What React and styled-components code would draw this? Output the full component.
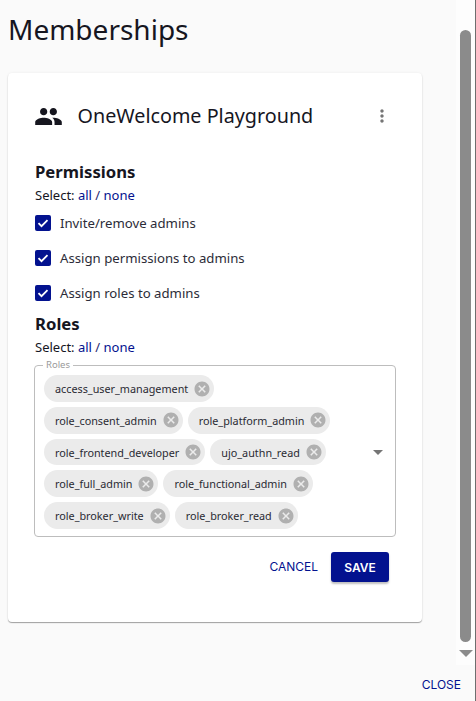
import React from "react";
import styled, { createGlobalStyle } from "styled-components";

const Global = createGlobalStyle`
  html, body { margin: 0; padding: 0; width: 476px; height: 701px; overflow: hidden; background: #fafafa; }
  * { box-sizing: border-box; }
  body { font-family: "Noto Sans", "Open Sans", sans-serif; color: #16161f; }
`;

const Dialog = styled.div`
  width: 476px;
  height: 701px;
  display: flex;
  flex-direction: column;
  border-right: 1px solid #6e6e6e;
`;
const Body = styled.div`
  height: 665px;
  display: flex;
`;
const Content = styled.div`
  width: 456px;
  padding: 0 34px 0 8px;
`;
const Title = styled.h1`
  margin: 0;
  height: 73px;
  padding-top: 11px;
  font-size: 28px;
  line-height: 36px;
  font-weight: 400;
`;
const Card = styled.section`
  width: 414px;
  height: 549px;
  background: #fff;
  border-radius: 4px;
  box-shadow: 0 1px 1px rgba(0,0,0,.35), 0 0 3px rgba(0,0,0,.06);
  padding: 0 27px;
`;
const CardHeader = styled.header`
  height: 86px;
  display: flex;
  align-items: center;
`;
const PeopleIcon = styled.svg`
  width: 29px;
  height: 29px;
  margin-left: -1px;
  fill: #16161f;
`;
const CardTitle = styled.div`
  font-size: 19.75px;
  line-height: 28px;
  margin-left: 14.5px;
  flex: 1;
`;
const MoreIcon = styled.svg`
  width: 20px;
  height: 20px;
  margin-right: 3px;
  fill: #757575;
`;
const Heading = styled.h2`
  margin: 0;
  font-size: 16.7px;
  line-height: 22px;
  font-weight: 700;
`;
const Permissions = styled.div`
  padding-top: 2px;
`;
const SelectLine = styled.div`
  font-size: 13px;
  line-height: 18px;
  margin-top: 3px;
  a { color: #03128f; text-decoration: none; }
`;
const All = styled.span`
  color: #2a2a70;
`;
const CheckRow = styled.label`
  display: flex;
  align-items: center;
  height: 35px;
  font-size: 13.2px;
  color: #2c2c38;
  &:first-of-type { margin-top: 1px; }
`;
const Box = styled.svg`
  width: 16px;
  height: 16px;
  margin-right: 9px;
  flex: none;
`;
const RolesBlock = styled.div`
  margin-top: 3px;
`;
const Field = styled.fieldset`
  margin: 5px 0 0 -1px;
  padding: 0 0 1px 9px;
  width: 362px;
  height: 176px;
  border: 1px solid #bdbdbd;
  border-radius: 4px;
  display: flex;
  align-items: center;
  min-inline-size: 0;
`;
const Legend = styled.legend`
  font-size: 9.5px;
  line-height: 8px;
  color: #9a9a9a;
  padding: 0 3px;
  margin-left: -1px;
`;
const Chips = styled.div`
  width: 295px;
  display: flex;
  flex-wrap: wrap;
  gap: 5px;
`;
const Chip = styled.div`
  height: 26.75px;
  border-radius: 13.5px;
  background: #ebebeb;
  display: flex;
  align-items: center;
  padding: 0 3px 0 11px;
  font-size: 10.8px;
  color: #2a2a33;
`;
const ChipX = styled.svg`
  width: 18px;
  height: 18px;
  margin-left: 5px;
  fill: #b0b0b0;
`;
const Caret = styled.div`
  width: 0;
  height: 0;
  margin-left: 34px;
  margin-top: 1px;
  border-left: 5px solid transparent;
  border-right: 5px solid transparent;
  border-top: 5px solid #757575;
`;
const Actions = styled.div`
  display: flex;
  justify-content: flex-end;
  align-items: center;
  width: 354px;
  margin-top: 15px;
  gap: 13px;
`;
const TextButton = styled.button`
  border: 0;
  background: none;
  padding: 0;
  font-family: Inter, sans-serif;
  font-size: 12px;
  font-weight: 400;
  color: #03128f;
  line-height: 30px;
`;
const SaveButton = styled.button`
  width: 58px;
  height: 30px;
  border: 0;
  border-radius: 3px;
  background: #03128f;
  color: #fff;
  padding: 0;
  font-family: Inter, sans-serif;
  font-size: 12px;
  font-weight: 600;
  box-shadow: 0 2px 2px rgba(0,0,0,.25);
`;
const Scrollbar = styled.div`
  width: 19px;
  background: #fdfdfd;
  display: flex;
  flex-direction: column;
  align-items: center;
  padding-top: 30px;
`;
const Thumb = styled.div`
  width: 11px;
  height: 612px;
  background: #8b8b8b;
  border-radius: 6px;
`;
const ArrowDown = styled.div`
  width: 0;
  height: 0;
  margin-top: 8px;
  border-left: 7px solid transparent;
  border-right: 7px solid transparent;
  border-top: 7px solid #8b8b8b;
`;
const Footer = styled.footer`
  flex: 1;
  display: flex;
  justify-content: flex-end;
  align-items: flex-start;
  padding: 5px 14px 0 0;
`;

const chips = ["access_user_management","role_consent_admin","role_platform_admin","role_frontend_developer","ujo_authn_read","role_full_admin","role_functional_admin","role_broker_write","role_broker_read"];
const checks = ["Invite/remove admins","Assign permissions to admins","Assign roles to admins"];

const Select = () => (
  <SelectLine>Select: <All><a href="#a">all</a> / <a href="#n">none</a></All></SelectLine>
);

export default function App() {
  return (
    <>
      <Global />
      <Dialog>
        <Body>
          <Content>
            <Title>Memberships</Title>
            <Card>
              <CardHeader>
                <PeopleIcon viewBox="0 0 24 24"><path d="M16 11c1.66 0 2.99-1.34 2.99-3S17.66 5 16 5s-3 1.34-3 3 1.34 3 3 3zm-8 0c1.66 0 2.99-1.34 2.99-3S9.66 5 8 5 5 6.34 5 8s1.34 3 3 3zm0 2c-2.33 0-7 1.17-7 3.5V19h14v-2.5c0-2.33-4.67-3.5-7-3.5zm8 0c-.29 0-.62.02-.97.05 1.16.84 1.97 1.97 1.97 3.45V19h6v-2.5c0-2.33-4.67-3.5-7-3.5z"/></PeopleIcon>
                <CardTitle>OneWelcome Playground</CardTitle>
                <MoreIcon viewBox="0 0 24 24"><path d="M12 8c1.1 0 2-.9 2-2s-.9-2-2-2-2 .9-2 2 .9 2 2 2zm0 2c-1.1 0-2 .9-2 2s.9 2 2 2 2-.9 2-2-.9-2-2-2zm0 6c-1.1 0-2 .9-2 2s.9 2 2 2 2-.9 2-2-.9-2-2-2z"/></MoreIcon>
              </CardHeader>
              <Permissions>
                <Heading>Permissions</Heading>
                <Select />
                {checks.map((c) => (
                  <CheckRow key={c}>
                    <Box viewBox="0 0 16 16"><rect width="16" height="16" rx="2" fill="#03128f"/><path d="M3.5 8.2l3 3 6-6" fill="none" stroke="#fff" strokeWidth="1.8"/></Box>
                    {c}
                  </CheckRow>
                ))}
              </Permissions>
              <RolesBlock>
                <Heading>Roles</Heading>
                <Select />
                <Field>
                  <Legend>Roles</Legend>
                  <Chips>
                    {chips.map((c) => (
                      <Chip key={c}>{c}
                        <ChipX viewBox="0 0 24 24"><path d="M12 2C6.47 2 2 6.47 2 12s4.47 10 10 10 10-4.47 10-10S17.53 2 12 2zm5 13.59L15.59 17 12 13.41 8.41 17 7 15.59 10.59 12 7 8.41 8.41 7 12 10.59 15.59 7 17 8.41 13.41 12 17 15.59z"/></ChipX>
                      </Chip>
                    ))}
                  </Chips>
                  <Caret />
                </Field>
              </RolesBlock>
              <Actions>
                <TextButton>CANCEL</TextButton>
                <SaveButton>SAVE</SaveButton>
              </Actions>
            </Card>
          </Content>
          <Scrollbar>
            <Thumb />
            <ArrowDown />
          </Scrollbar>
        </Body>
        <Footer><TextButton>CLOSE</TextButton></Footer>
      </Dialog>
    </>
  );
}
